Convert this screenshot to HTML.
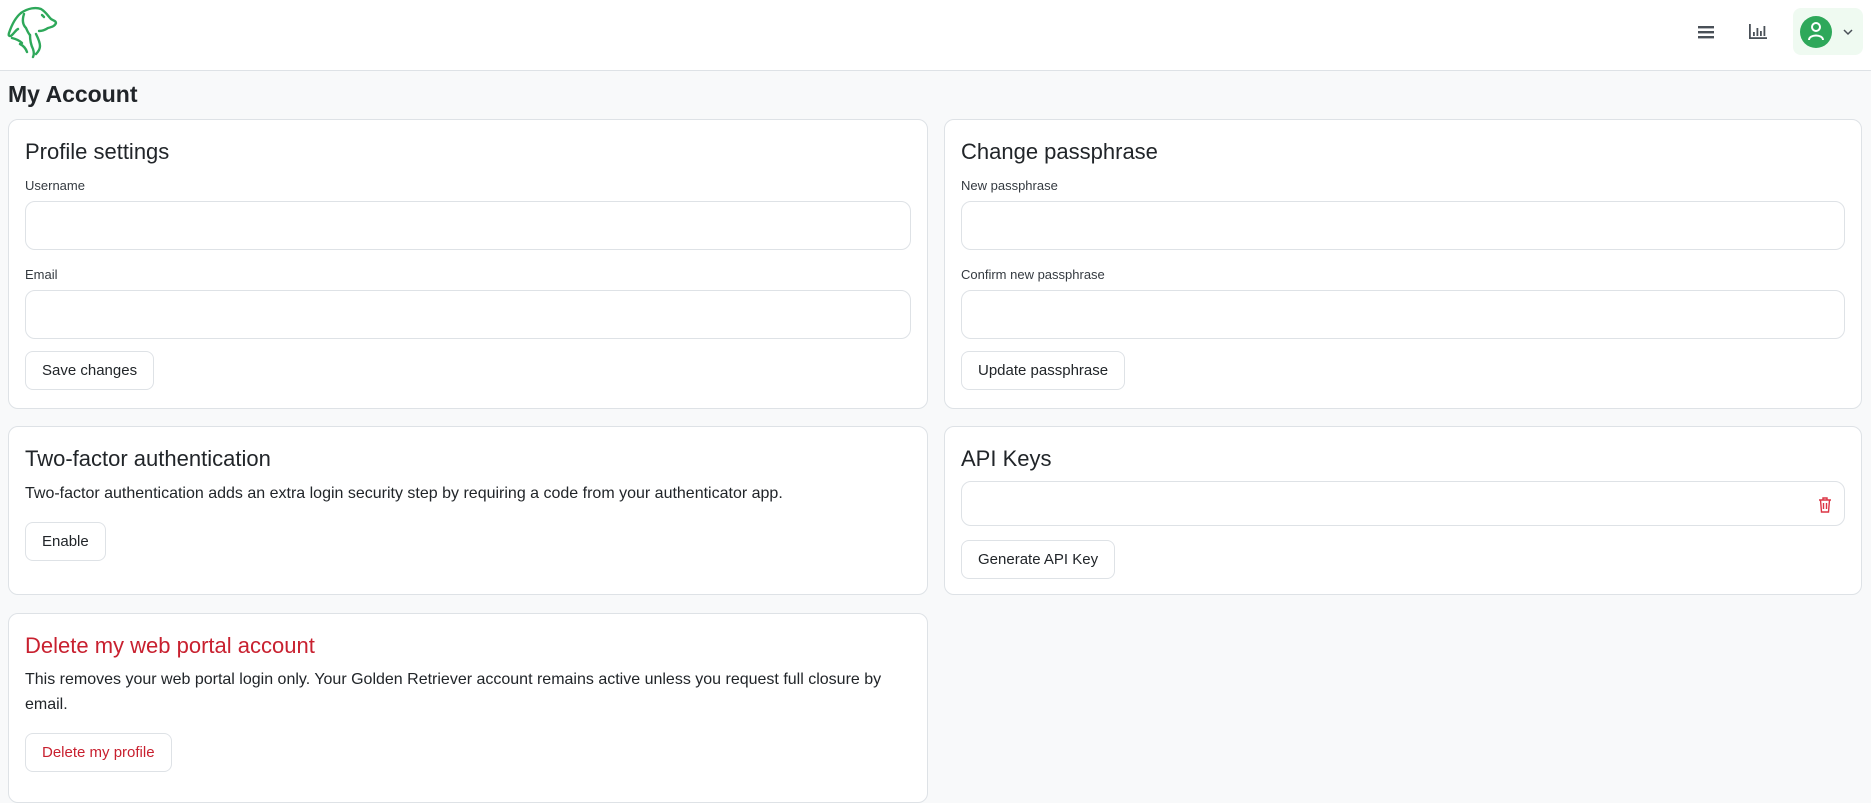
<!DOCTYPE html>
<html><head><meta charset="utf-8"><style>
*{box-sizing:border-box;margin:0;padding:0}
body{width:1871px;height:780px;overflow:hidden;background:#f8f9fa;font-family:"Liberation Sans",sans-serif;color:#212529;position:relative}
.hdr{position:absolute;left:0;top:0;width:1871px;height:71px;background:#fff;border-bottom:1px solid #dee2e6}
h1{position:absolute;left:8px;top:81px;font-size:23px;font-weight:bold;color:#212529}
.card{position:absolute;background:#fff;border:1px solid #dee2e6;border-radius:10px;padding:0 16px}
.card h2{font-size:22px;font-weight:normal;margin-top:19px;margin-bottom:13px;color:#212529}
.lbl{font-size:13px;color:#343a40;margin-bottom:8px}
.inp{height:49px;border:1px solid #dee2e6;border-radius:10px;margin-bottom:17px}
.btn{display:inline-block;height:39px;line-height:37px;border:1px solid #dee2e6;border-radius:8px;padding:0 16px;font-size:15px;color:#212529;background:#fff}
p{font-size:16px;line-height:25px}
</style></head><body>
<div class="hdr">
<svg style="position:absolute;left:0;top:0" width="64" height="64" viewBox="0 0 64 64" fill="none" stroke="#2ea85a" stroke-width="2.4" stroke-linecap="round" stroke-linejoin="round">
<path d="M21 13 C28 8 36 7 41 9 C46 12 48 16 51 19 C54 21 56 21 56 23 C55 26 52 27 48 28 C45 30 42 31 39 31"/>
<path d="M21 13 C16 17 12 24 9 33 C8 36 10 37 12 35 C15 32 16 30 18 29"/>
<path d="M24 14 C22 20 23 25 26 28 C27 30 28 33 30 35"/>
<path d="M12 38 C16 39 19 40 22 43"/>
<path d="M20 44 C24 46 26 49 27 52"/>
<path d="M30 35 C30 40 31 45 33 49 C34 52 34 55 33 57"/>
<path d="M36 34 C38 38 40 42 40 46 C40 49 38 52 36 54"/>
<path d="M42 15 L44 17"/>
</svg>
<svg style="position:absolute;left:1697px;top:24px" width="18" height="16" viewBox="0 0 18 16"><rect x="1" y="2" width="16" height="2.4" fill="#495057"/><rect x="1" y="7" width="16" height="2.4" fill="#495057"/><rect x="1" y="12" width="16" height="2.4" fill="#495057"/></svg>
<svg style="position:absolute;left:1748px;top:22px" width="20" height="18" viewBox="0 0 20 18" fill="#495057"><rect x="1" y="2" width="1.8" height="15"/><rect x="1" y="15.2" width="18" height="1.8"/><rect x="5" y="10" width="1.8" height="4"/><rect x="8.5" y="6" width="1.8" height="8"/><rect x="12" y="9" width="1.8" height="5"/><rect x="15.5" y="4" width="1.8" height="10"/></svg>
<div style="position:absolute;left:1793px;top:8px;width:70px;height:47px;background:#effaf1;border-radius:8px"></div>
<div style="position:absolute;left:1800px;top:16px;width:32px;height:32px;background:#2ea85a;border-radius:50%"></div>
<svg style="position:absolute;left:1806px;top:21px" width="20" height="22" viewBox="0 0 20 22" fill="none" stroke="#fff" stroke-width="2"><circle cx="10" cy="6" r="4"/><path d="M3 19 C3 13 17 13 17 19"/></svg>
<svg style="position:absolute;left:1842px;top:27px" width="12" height="10" viewBox="0 0 12 10" fill="none" stroke="#495057" stroke-width="1.5"><path d="M2 3 L6 7 L10 3"/></svg>
</div>
<h1>My Account</h1>

<div class="card" style="left:8px;top:119px;width:920px;height:290px">
<h2>Profile settings</h2>
<div class="lbl">Username</div><div class="inp"></div>
<div class="lbl">Email</div><div class="inp" style="margin-bottom:12px"></div>
<span class="btn">Save changes</span>
</div>
<div class="card" style="left:944px;top:119px;width:918px;height:290px">
<h2>Change passphrase</h2>
<div class="lbl">New passphrase</div><div class="inp"></div>
<div class="lbl">Confirm new passphrase</div><div class="inp" style="margin-bottom:12px"></div>
<span class="btn">Update passphrase</span>
</div>

<div class="card" style="left:8px;top:426px;width:920px;height:169px">
<h2 style="margin-bottom:9px">Two-factor authentication</h2>
<p>Two-factor authentication adds an extra login security step by requiring a code from your authenticator app.</p>
<span class="btn" style="margin-top:16px">Enable</span>
</div>
<div class="card" style="left:944px;top:426px;width:918px;height:169px">
<h2 style="margin-bottom:9px">API Keys</h2>
<div class="inp" style="height:45px;position:relative;margin-bottom:14px"><svg style="position:absolute;right:12px;top:15px" width="14" height="16" viewBox="0 0 14 16" fill="none" stroke="#dc3545" stroke-width="1.4"><path d="M1 3h12M5 3V1h4v2M2.5 3l1 12h7l1-12M5.5 6v6M8.5 6v6"/></svg></div>
<span class="btn">Generate API Key</span>
</div>

<div class="card" style="left:8px;top:613px;width:920px;height:190px">
<h2 style="color:#c8202f;margin-bottom:8px">Delete my web portal account</h2>
<p style="width:870px">This removes your web portal login only. Your Golden Retriever account remains active unless you request full closure by email.</p>
<span class="btn" style="margin-top:16px;color:#c8202f">Delete my profile</span>
</div>
</body></html>
